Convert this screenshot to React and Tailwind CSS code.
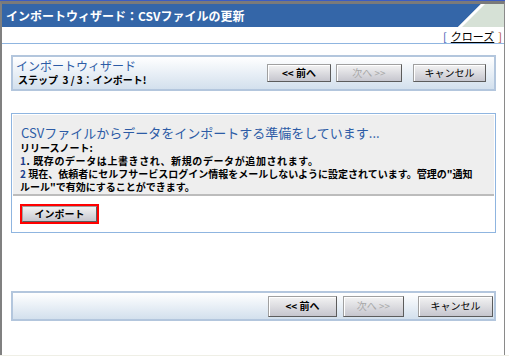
import React from "react";

function Btn({ label, kind, w, h }) {
  const size = h === "lg" ? "h-[21px]" : "h-[18px]";
  const text =
    kind === "disabled"
      ? "text-[#a8a8a8] font-normal"
      : kind === "bold"
      ? "text-black font-bold"
      : "text-black font-normal";
  return (
    <div
      className={`flex items-center justify-center ${size} ${text} border border-[#a0a0a0] border-r-[#5c5c5c] border-b-[#5c5c5c] bg-linear-to-b from-[#f3f3f3] to-[#c6c6ce] shadow-[inset_1px_1px_0_#ffffff] text-[10px] leading-none`}
      style={{ width: w }}
    >
      {label}
    </div>
  );
}

export default function App() {
  return (
    <div className="w-[509px] h-[356px] bg-white overflow-hidden font-['Noto_Sans_CJK_JP','Liberation_Sans',sans-serif]">
      <div className="w-[505px] border-t border-t-[#3a5cc4]">
        <div className="h-[354px] border-t-[3px] border-t-[#7a7a7a] border-l-2 border-l-[#808080] border-r border-r-[#8a8a8a] flex flex-col">
          {/* title bar */}
          <div className="flex h-[23px]">
            <div className="flex-1 bg-[#3466a8] flex items-center pl-[4px]">
              <span className="text-white font-bold text-[12px] leading-none">
                インポートウィザード：CSVファイルの更新
              </span>
            </div>
            <svg width="48" height="23" viewBox="0 0 48 23" className="block">
              <rect x="0" y="0" width="48" height="23" fill="#d6e1d6" />
              <polygon points="0,0 25,0 2,23 0,23" fill="#3466a8" />
              <polygon points="25,0 29,0 6,23 2,23" fill="#ffffff" />
            </svg>
          </div>
          {/* close link row */}
          <div className="h-[16px] flex items-end justify-end pr-[2px] pb-[1px]">
            <span className="text-[11px] leading-[12px] text-black flex">
              <span className="text-[#2a4fb0]">[</span>
              <span className="underline mx-[4px]">クローズ</span>
              <span className="text-[#b04a2a]">]</span>
            </span>
          </div>
          <div className="h-px bg-[#8fb5e0]" />

          {/* step panel */}
          <div className="mt-[11px] ml-[9px] w-[485px] h-[36px] border-2 border-[#b3c6dd] bg-linear-to-b from-white to-[#d3e0ed] flex items-center justify-between pl-[3px] pr-[8px]">
            <div className="flex flex-col">
              <span className="text-[12px] leading-[14px] text-[#2d5ca6]">インポートウィザード</span>
              <span className="text-[10px] leading-[14px] font-bold text-black pl-[2px]">
                ステップ&nbsp;&nbsp;3 / 3：インポート!
              </span>
            </div>
            <div className="flex items-center">
              <Btn label="<< 前へ" kind="bold" w={64} />
              <div className="w-[5px]" />
              <Btn label="次へ >>" kind="disabled" w={66} />
              <div className="w-[11px]" />
              <Btn label="キャンセル" kind="normal" w={73} />
            </div>
          </div>

          {/* main box */}
          <div className="mt-[22px] ml-[9px] w-[485px] h-[120px] border border-[#8fb5e0] p-px flex flex-col">
            <div className="bg-[#eeeeee] border-b-2 border-b-[#bcbcbc] pl-[7px] pt-[10px] pb-[1px]">
              <div className="text-[13px] leading-[16px] text-[#2d5ca6] pl-px">
                CSVファイルからデータをインポートする準備をしています...
              </div>
              <div className="text-[10px] leading-[13px] font-bold text-black">
                <div>リリースノート:</div>
                <div className="tracking-[0.6px]">
                  <span className="text-[#1c3d8c]">1</span>. 既存のデータは上書きされ、新規のデータが追加されます。
                </div>
                <div>
                  <span className="text-[#1c3d8c]">2</span> 現在、依頼者にセルフサービスログイン情報をメールしないように設定されています。管理の"通知
                  <br />
                  ルール"で有効にすることができます。
                </div>
              </div>
            </div>
            <div className="ml-[7px] mt-[8px] w-[79px] h-[20px] border-2 border-[#ff0000] flex">
              <div className="flex-1 flex items-center justify-center border border-[#a0a0a0] border-r-[#5c5c5c] border-b-[#5c5c5c] bg-linear-to-b from-[#f3f3f3] to-[#c6c6ce] text-[10px] font-bold leading-none text-black">
                インポート
              </div>
            </div>
          </div>

          {/* bottom panel */}
          <div className="mt-[58px] ml-[9px] w-[485px] h-[30px] border-2 border-[#b3c6dd] bg-linear-to-b from-white to-[#d3e0ed] flex items-center justify-end pr-[1px]">
            <Btn label="<< 前へ" kind="bold" w={69} h="lg" />
            <div className="w-[6px]" />
            <Btn label="次へ >>" kind="disabled" w={61} h="lg" />
            <div className="w-[14px]" />
            <Btn label="キャンセル" kind="normal" w={75} h="lg" />
          </div>
          <div className="flex-1" />
        </div>
      </div>
      <div className="h-px bg-[#efefe6] w-[509px]" />
    </div>
  );
}
